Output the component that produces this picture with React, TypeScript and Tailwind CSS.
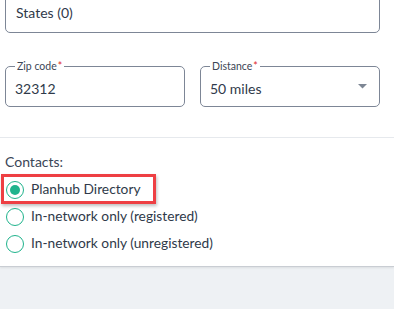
import React from "react";

const font = { fontFamily: "Lato, 'Open Sans', sans-serif" };

const Field = ({ label, value, select }: { label: string; value: string; select?: boolean }) => (
  <fieldset className="flex-1 h-[47px] border border-[#7d8696] rounded-[5px] px-[9px] min-w-0">
    <legend className="px-[2px] text-[10.5px] leading-[12px] text-[#3c4656]">
      {label}
      <span className="text-[#e02b2b] ml-[1px]">*</span>
    </legend>
    <div className="flex items-center justify-between h-[33px]">
      <span className="text-[14px] text-[#2f3a4a]">{value}</span>
      {select && (
        <svg width="9" height="5" viewBox="0 0 9 5" className="mr-[3px] -mt-[4px]">
          <path d="M0 0h9L4.5 4.5z" fill="#7d8694" />
        </svg>
      )}
    </div>
  </fieldset>
);

const Radio = ({ label, checked }: { label: string; checked?: boolean }) => (
  <div className="flex items-center h-[27px] gap-[7px] pl-[6px]">
    <span className="w-[18px] h-[18px] rounded-full border-[1.5px] border-[#1fb38c] flex items-center justify-center">
      {checked && <span className="w-[10px] h-[10px] rounded-full bg-[#1fb38c]" />}
    </span>
    <span className="text-[13.75px] text-[#2f3a4a]">{label}</span>
  </div>
);

export default function App() {
  return (
    <div style={font} className="w-[394px] h-[309px] bg-[#eef1f4] overflow-hidden">
      <div className="bg-white border-b border-[#c9cdd3] shadow-[0_1px_2px_rgba(0,0,0,0.08)]">
        <div className="pl-[5px] pr-[14px] overflow-hidden">
          <div className="-mt-[12px] h-[45px] border border-[#7d8696] rounded-[5px] px-[10px] pt-[13px] text-[14px] text-[#2f3a4a]">
            States (0)
          </div>
          <div className="flex gap-[15px] mt-[27px]">
            <Field label="Zip code" value="32312" />
            <Field label="Distance" value="50 miles" select />
          </div>
        </div>
        <div className="mt-[30px] border-t border-[#e6e9ed]" />
        <div className="pt-[13px] pb-[9px]">
          <div className="pl-[5px] text-[14px] text-[#3a4556] mb-[4px]">Contacts:</div>
          <div className="relative">
            <Radio label="Planhub Directory" checked />
            <span className="absolute left-[1px] -top-[2px] w-[155px] h-[30px] border-[3px] border-[#ee3f43] shadow-[1px_2px_3px_rgba(0,0,0,0.25)] pointer-events-none" />
          </div>
          <Radio label="In-network only (registered)" />
          <Radio label="In-network only (unregistered)" />
        </div>
      </div>
    </div>
  );
}
